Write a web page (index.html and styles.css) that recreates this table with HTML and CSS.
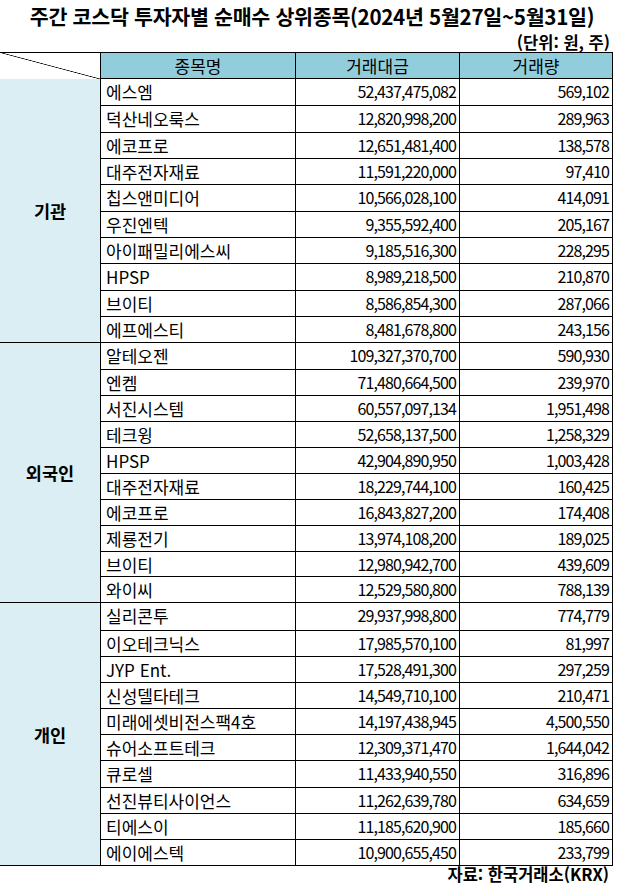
FILE: index.html
```html
<!DOCTYPE html>
<html lang="ko">
<head>
<meta charset="utf-8">
<link rel="stylesheet" href="styles.css">
</head>
<body>
<div class="page">
  <h1 class="title">주간 코스닥 투자자별 순매수 상위종목(2024년 5월27일~5월31일)</h1>
  <div class="unit">(단위: 원, 주)</div>
  <div class="table">
    <div class="head">
      <div class="corner"></div>
      <div class="hcell">종목명</div>
      <div class="hcell">거래대금</div>
      <div class="hcell">거래량</div>
    </div>
    <div class="group g1">
      <div class="label">기관</div>
      <div class="name">에스엠</div><div class="num">52,437,475,082</div><div class="num">569,102</div>
      <div class="name">덕산네오룩스</div><div class="num">12,820,998,200</div><div class="num">289,963</div>
      <div class="name">에코프로</div><div class="num">12,651,481,400</div><div class="num">138,578</div>
      <div class="name">대주전자재료</div><div class="num">11,591,220,000</div><div class="num">97,410</div>
      <div class="name">칩스앤미디어</div><div class="num">10,566,028,100</div><div class="num">414,091</div>
      <div class="name">우진엔텍</div><div class="num">9,355,592,400</div><div class="num">205,167</div>
      <div class="name">아이패밀리에스씨</div><div class="num">9,185,516,300</div><div class="num">228,295</div>
      <div class="name">HPSP</div><div class="num">8,989,218,500</div><div class="num">210,870</div>
      <div class="name">브이티</div><div class="num">8,586,854,300</div><div class="num">287,066</div>
      <div class="name">에프에스티</div><div class="num">8,481,678,800</div><div class="num">243,156</div>
    </div>
    <div class="group g2">
      <div class="label">외국인</div>
      <div class="name">알테오젠</div><div class="num">109,327,370,700</div><div class="num">590,930</div>
      <div class="name">엔켐</div><div class="num">71,480,664,500</div><div class="num">239,970</div>
      <div class="name">서진시스템</div><div class="num">60,557,097,134</div><div class="num">1,951,498</div>
      <div class="name">테크윙</div><div class="num">52,658,137,500</div><div class="num">1,258,329</div>
      <div class="name">HPSP</div><div class="num">42,904,890,950</div><div class="num">1,003,428</div>
      <div class="name">대주전자재료</div><div class="num">18,229,744,100</div><div class="num">160,425</div>
      <div class="name">에코프로</div><div class="num">16,843,827,200</div><div class="num">174,408</div>
      <div class="name">제룡전기</div><div class="num">13,974,108,200</div><div class="num">189,025</div>
      <div class="name">브이티</div><div class="num">12,980,942,700</div><div class="num">439,609</div>
      <div class="name">와이씨</div><div class="num">12,529,580,800</div><div class="num">788,139</div>
    </div>
    <div class="group g3">
      <div class="label">개인</div>
      <div class="name">실리콘투</div><div class="num">29,937,998,800</div><div class="num">774,779</div>
      <div class="name">이오테크닉스</div><div class="num">17,985,570,100</div><div class="num">81,997</div>
      <div class="name">JYP Ent.</div><div class="num">17,528,491,300</div><div class="num">297,259</div>
      <div class="name">신성델타테크</div><div class="num">14,549,710,100</div><div class="num">210,471</div>
      <div class="name">미래에셋비전스팩4호</div><div class="num">14,197,438,945</div><div class="num">4,500,550</div>
      <div class="name">슈어소프트테크</div><div class="num">12,309,371,470</div><div class="num">1,644,042</div>
      <div class="name">큐로셀</div><div class="num">11,433,940,550</div><div class="num">316,896</div>
      <div class="name">선진뷰티사이언스</div><div class="num">11,262,639,780</div><div class="num">634,659</div>
      <div class="name">티에스이</div><div class="num">11,185,620,900</div><div class="num">185,660</div>
      <div class="name">에이에스텍</div><div class="num">10,900,655,450</div><div class="num">233,799</div>
    </div>
  </div>
  <div class="source">자료: 한국거래소(KRX)</div>
</div>
</body>
</html>
```
FILE: styles.css
```css
* { box-sizing: border-box; }
html, body { margin: 0; padding: 0; background: #fff; }
body {
  font-family: "Noto Sans CJK KR", "Noto Sans", sans-serif;
  color: #000;
}
.page { width: 628px; }
.title {
  margin: 0;
  height: 32px;
  line-height: 32px;
  font-size: 20.6px;
  font-weight: 700;
  text-align: center;
  letter-spacing: -0.3px;
  padding-right: 4px;
}
.unit {
  height: 20px;
  line-height: 20px;
  font-size: 16.5px;
  font-weight: 700;
  text-align: right;
  padding-right: 18px;
}
.table {
  width: 613px;
  border-top: 1px solid #000;
}
.head {
  display: grid;
  grid-template-columns: 101px 195px 164px 153px;
  height: 26px;
}
.corner {
  border-right: 1px solid #000;
  background: linear-gradient(to top right, transparent calc(50% - 0.7px), #000 50%, transparent calc(50% + 0.7px));
  margin-left: 2px;
}
.hcell {
  background: #92cddc;
  border-right: 1px solid #000;
  border-bottom: 1px solid #000;
  text-align: center;
  font-size: 17px;
  line-height: 25px;
}
.group {
  display: grid;
  grid-template-columns: 101px 195px 164px 153px;
  border-bottom: 1px solid #000;
}
.g1 { grid-template-rows: repeat(10, 26.35px); }
.g2 { grid-template-rows: repeat(10, 25.9px); }
.g3 { grid-template-rows: repeat(10, 26.2px); }
.label {
  grid-row: 1 / span 10;
  grid-column: 1;
  background: #daeef3;
  border-right: 1px solid #000;
  display: flex;
  align-items: center;
  justify-content: center;
  font-weight: 700;
  font-size: 17.5px;
}
.name, .num {
  border-top: 1px solid #000;
  border-right: 1px solid #000;
  font-size: 16px;
  line-height: 25px;
  white-space: nowrap;
  overflow: hidden;
}
.group > :nth-child(-n+4) { border-top: none; }
.name {
  padding-left: 5px;
  font-size: 17px;
}
.num {
  text-align: right;
  padding-right: 3px;
  letter-spacing: -0.9px;
}
.source {
  height: 18px;
  line-height: 16px;
  font-size: 16.5px;
  font-weight: 700;
  text-align: right;
  padding-right: 19px;
}
```
